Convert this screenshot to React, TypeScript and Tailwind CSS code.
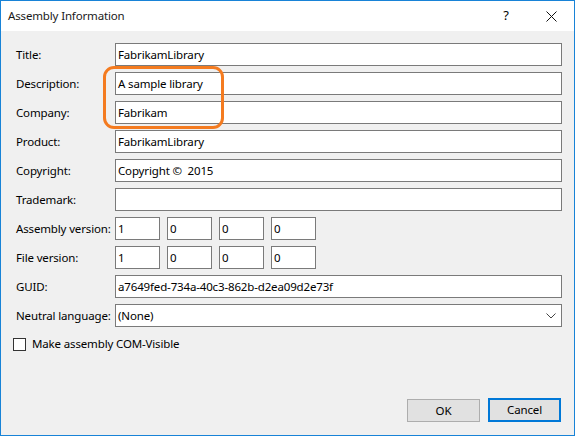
const font = { fontFamily: '"Noto Sans", "Segoe UI", sans-serif' };

const TextRow: React.FC<{ label: string; value?: string }> = ({ label, value = "" }) => (
  <div className="flex h-[23px] items-center">
    <span className="w-[99px] shrink-0 whitespace-nowrap">{label}</span>
    <div className="flex h-[23px] flex-1 items-center whitespace-pre border border-[#7a7a7a] bg-white pl-[2px]">
      {value}
    </div>
  </div>
);

const VersionRow: React.FC<{ label: string; parts: string[] }> = ({ label, parts }) => (
  <div className="flex h-[23px] items-center">
    <span className="w-[99px] shrink-0 whitespace-nowrap">{label}</span>
    <div className="flex gap-[7px]">
      {parts.map((p, i) => (
        <div
          key={i}
          className="flex h-[23px] w-[45px] items-center border border-[#7a7a7a] bg-white pl-[2px]"
        >
          {p}
        </div>
      ))}
    </div>
  </div>
);

export default function App() {
  return (
    <div
      className="relative flex h-[436px] w-[575px] flex-col border border-[#1883d7] bg-[#f0f0f0] text-[11.5px] tracking-[-0.15px] text-black"
      style={font}
    >
      {/* title bar */}
      <div className="flex h-[30px] shrink-0 items-center bg-white pl-[7px]">
        <span className="flex-1 text-[#1a1a1a]">Assembly Information</span>
        <span className="w-[14px] text-center text-[13px]">?</span>
        <div className="ml-[32px] mr-[17px] flex w-[12px] items-center justify-center">
          <svg width="11" height="11" viewBox="0 0 11 11">
            <path d="M0.5 0.5L10.5 10.5M10.5 0.5L0.5 10.5" stroke="#111" strokeWidth="1" />
          </svg>
        </div>
      </div>

      <div className="flex flex-col gap-[6px] pl-[15px] pr-[12px] pt-[12px]">
        <TextRow label="Title:" value="FabrikamLibrary" />
        <TextRow label="Description:" value="A sample library" />
        <TextRow label="Company:" value="Fabrikam" />
        <TextRow label="Product:" value="FabrikamLibrary" />
        <TextRow label="Copyright:" value="Copyright ©  2015" />
        <TextRow label="Trademark:" />
        <VersionRow label="Assembly version:" parts={["1", "0", "0", "0"]} />
        <VersionRow label="File version:" parts={["1", "0", "0", "0"]} />
        <TextRow label="GUID:" value="a7649fed-734a-40c3-862b-d2ea09d2e73f" />
        <div className="flex h-[23px] items-center">
          <span className="w-[99px] shrink-0 whitespace-nowrap">Neutral language:</span>
          <div className="flex h-[23px] flex-1 items-center justify-between border border-[#7a7a7a] bg-white pl-[2px] pr-[5px]">
            <span>(None)</span>
            <svg width="10" height="6" viewBox="0 0 10 6">
              <path d="M0.5 0.5L5 5L9.5 0.5" fill="none" stroke="#444" strokeWidth="1" />
            </svg>
          </div>
        </div>
      </div>

      <label className="ml-[12px] mt-[10px] flex h-[14px] items-center gap-[6px] leading-none">
        <span className="h-[13px] w-[13px] shrink-0 border border-[#333] bg-white" />
        <span>Make assembly COM-Visible</span>
      </label>

      <div className="flex flex-1 items-end justify-end gap-[8px] pb-[13px] pr-[13px]">
        <button className="flex h-[23px] w-[73px] items-center justify-center border border-[#adadad] bg-[#e1e1e1]">
          OK
        </button>
        <button className="flex h-[24px] w-[73px] items-center justify-center border-2 border-[#0078d7] bg-[#e1e1e1]">
          Cancel
        </button>
      </div>

      {/* callout highlight */}
      <div className="pointer-events-none absolute left-[102px] top-[65px] h-[63px] w-[121px] rounded-[11px] border-[3px] border-[#f47b20]" />
    </div>
  );
}
